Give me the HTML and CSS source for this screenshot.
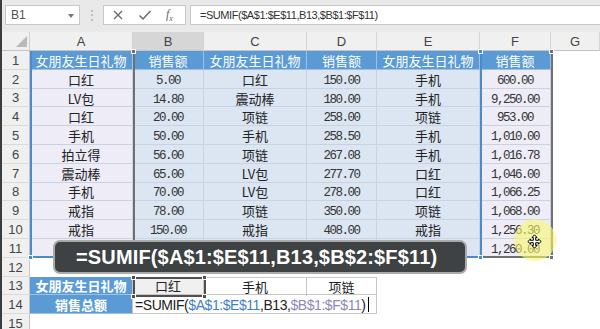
FILE: index.html
```
<!DOCTYPE html>
<html lang="zh-CN">
<head>
    <meta charset="UTF-8">
    <title>SUMIF 多列条件求和</title>
    <link rel="stylesheet" href="styles.css">
</head>
<body>
    <div class="formula-bar">
        <div class="name-box">B1<span class="drop"></span></div>
        <div class="dots">⋮</div>
        <div class="fx-box">
            <svg class="ico" width="12" height="12" viewBox="0 0 12 12"><path d="M2 2 L10 10 M10 2 L2 10" stroke="#6a6a6a" stroke-width="1.3" fill="none"/></svg>
            <svg class="ico" width="14" height="12" viewBox="0 0 14 12"><path d="M1.5 6.5 L5 10 L12.5 2" stroke="#6a6a6a" stroke-width="1.5" fill="none"/></svg>
            <span class="fx">f<sub>x</sub></span>
        </div>
        <div class="formula-input">=SUMIF($A$1:$E$11,B13,$B$1:$F$11)</div>
    </div>

    <div class="sheet">
        <div class="corner"><span class="tri"></span></div>
        <div class="ch">A</div><div class="ch sel">B</div><div class="ch">C</div><div class="ch">D</div><div class="ch">E</div><div class="ch">F</div><div class="ch">G</div>

        <div class="rh">1</div>
        <div class="c h">女朋友生日礼物</div><div class="c h">销售额</div><div class="c h">女朋友生日礼物</div><div class="c h">销售额</div><div class="c h">女朋友生日礼物</div><div class="c h">销售额</div><div class="e"></div>

        <div class="rh">2</div>
        <div class="c la">口红</div><div class="c lb n">5.00</div><div class="c lb">口红</div><div class="c lb n">150.00</div><div class="c lb">手机</div><div class="c la n">600.00</div><div class="e"></div>

        <div class="rh">3</div>
        <div class="c la">LV包</div><div class="c lb n">14.80</div><div class="c lb">震动棒</div><div class="c lb n">180.00</div><div class="c lb">手机</div><div class="c la n">9,250.00</div><div class="e"></div>

        <div class="rh">4</div>
        <div class="c la">口红</div><div class="c lb n">20.00</div><div class="c lb">项链</div><div class="c lb n">258.00</div><div class="c lb">项链</div><div class="c la n">953.00</div><div class="e"></div>

        <div class="rh">5</div>
        <div class="c la">手机</div><div class="c lb n">50.00</div><div class="c lb">手机</div><div class="c lb n">258.50</div><div class="c lb">手机</div><div class="c la n">1,010.00</div><div class="e"></div>

        <div class="rh">6</div>
        <div class="c la">拍立得</div><div class="c lb n">56.00</div><div class="c lb">项链</div><div class="c lb n">267.08</div><div class="c lb">手机</div><div class="c la n">1,016.78</div><div class="e"></div>

        <div class="rh">7</div>
        <div class="c la">震动棒</div><div class="c lb n">65.00</div><div class="c lb">LV包</div><div class="c lb n">277.70</div><div class="c lb">口红</div><div class="c la n">1,046.00</div><div class="e"></div>

        <div class="rh">8</div>
        <div class="c la">手机</div><div class="c lb n">70.00</div><div class="c lb">LV包</div><div class="c lb n">278.00</div><div class="c lb">口红</div><div class="c la n">1,066.25</div><div class="e"></div>

        <div class="rh">9</div>
        <div class="c la">戒指</div><div class="c lb n">78.00</div><div class="c lb">项链</div><div class="c lb n">350.00</div><div class="c lb">项链</div><div class="c la n">1,068.00</div><div class="e"></div>

        <div class="rh">10</div>
        <div class="c la">戒指</div><div class="c lb n">150.00</div><div class="c lb">戒指</div><div class="c lb n">408.00</div><div class="c lb">戒指</div><div class="c la n">1,256.30</div><div class="e"></div>

        <div class="rh">11</div>
        <div class="c la"></div><div class="c lb"></div><div class="c lb"></div><div class="c lb"></div><div class="c lb"></div><div class="c la n">1,260.00</div><div class="e"></div>

        <div class="rh">12</div>
        <div class="e"></div><div class="e"></div><div class="e"></div><div class="e"></div><div class="e"></div><div class="e"></div><div class="e"></div>

        <div class="rh">13</div>
        <div class="c h b">女朋友生日礼物</div><div class="c refcell">口红</div><div class="c w top">手机</div><div class="c w top">项链</div><div class="e"></div><div class="e"></div><div class="e"></div>

        <div class="rh">14</div>
        <div class="c h b">销售总额</div>
        <div class="c edit"><span class="edit-text">=SUMIF(<span class="r1">$A$1:$E$11</span>,B13,<span class="r2">$B$1:$F$11</span>)<span class="caret"></span></span></div>
        <div class="c w"></div><div class="c w"></div><div class="e"></div><div class="e"></div><div class="e"></div>

        <div class="rh">15</div>
        <div class="e"></div><div class="e"></div><div class="e"></div><div class="e"></div><div class="e"></div><div class="e"></div><div class="e"></div>

        <!-- 公式引用区域的高亮框 -->
        <div class="range range-b"></div>
        <div class="range range-a"></div>
        <div class="ref-box"></div>
        <span class="hd hd-gray" style="left:129px;top:17px"></span>
        <span class="hd hd-blue" style="left:476px;top:17px"></span>
        <span class="hd hd-gray" style="left:547px;top:17px"></span>
        <span class="hd hd-blue" style="left:476px;top:223px"></span>
        <span class="hd hd-gray" style="left:547px;top:223px"></span>
        <span class="hd hd-blue" style="left:26px;top:223px"></span>
        <span class="hd hd-dark" style="left:129px;top:243px"></span>
        <span class="hd hd-dark" style="left:200px;top:243px"></span>
        <span class="hd hd-dark" style="left:129px;top:262px"></span>
        <span class="hd hd-dark" style="left:200px;top:262px"></span>

        <div class="tip">=SUMIF($A$1:$E$11,B13,$B$2:$F$11)</div>

        <div class="spot"></div>
        <svg class="move" width="15" height="15" viewBox="0 0 15 15">
            <path d="M7.5 0.8 L10 3.5 L8.7 3.5 L8.7 6.3 L11.5 6.3 L11.5 5 L14.2 7.5 L11.5 10 L11.5 8.7 L8.7 8.7 L8.7 11.5 L10 11.5 L7.5 14.2 L5 11.5 L6.3 11.5 L6.3 8.7 L3.5 8.7 L3.5 10 L0.8 7.5 L3.5 5 L3.5 6.3 L6.3 6.3 L6.3 3.5 L5 3.5 Z" fill="#fff" stroke="#000" stroke-width="1"/>
        </svg>
    </div>
</body>
</html>
```

FILE: styles.css
```
body {
    margin: 0;
    width: 600px;
    height: 329px;
    overflow: hidden;
    box-sizing: border-box;
    border-left: 2px solid #3c3c3c;
    background: #fff;
    font-family: "Liberation Sans", Arial, sans-serif;
}

/* 编辑栏 */
.formula-bar {
    height: 32px;
    box-sizing: border-box;
    padding: 5px 0 0 3px;
    display: flex;
    align-items: flex-start;
    background: #e9e9e9;
}

.name-box {
    width: 75px;
    height: 20px;
    box-sizing: border-box;
    border: 1px solid #c8c8c8;
    background: #fff;
    position: relative;
    padding-left: 5px;
    font-size: 12px;
    line-height: 18px;
    color: #505050;
}

.drop {
    position: absolute;
    right: 5px;
    top: 8px;
    border-left: 3px solid transparent;
    border-right: 3px solid transparent;
    border-top: 4px solid #777;
}

.dots {
    width: 23px;
    text-align: center;
    font-size: 12px;
    line-height: 20px;
    color: #a8a8a8;
}

.fx-box {
    width: 83px;
    height: 20px;
    box-sizing: border-box;
    border: 1px solid #c8c8c8;
    background: #fff;
    display: flex;
    align-items: center;
    padding-left: 8px;
    gap: 14px;
}

.fx {
    font-family: "Liberation Serif", serif;
    font-style: italic;
    font-size: 12px;
    color: #666;
}

.fx sub {
    font-size: 8px;
}

.formula-input {
    flex: 1;
    height: 20px;
    margin-left: 4px;
    box-sizing: border-box;
    border: 1px solid #c8c8c8;
    border-right: 0;
    background: #fff;
    padding-left: 9px;
    font-size: 11px;
    letter-spacing: -0.45px;
    line-height: 18px;
    color: #333;
}

/* 工作表 */
.sheet {
    position: relative;
    display: grid;
    grid-template-columns: 28px 103px 71px 103px 70px 103px 71px 1fr;
    grid-template-rows: 19px repeat(15, 18.8px);
}

.corner {
    position: relative;
    background: #f0f0f0;
    border-right: 1px solid #d0d0d0;
    border-bottom: 1px solid #c4c4c4;
}

.tri {
    position: absolute;
    right: 2px;
    bottom: 3px;
    border-left: 11px solid transparent;
    border-bottom: 11px solid #b9b9b9;
}

.ch {
    background: #f0f0f0;
    border-right: 1px solid #d4d4d4;
    border-bottom: 1px solid #c4c4c4;
    display: flex;
    align-items: center;
    justify-content: center;
    font-size: 13px;
    color: #444;
}

.ch.sel {
    background: #d6d6d6;
}

.rh {
    background: #f0f0f0;
    border-right: 1px solid #c4c4c4;
    border-bottom: 1px solid #dadada;
    display: flex;
    align-items: center;
    justify-content: center;
    padding-top: 1px;
    font-size: 13px;
    color: #444;
}

.c {
    display: flex;
    align-items: center;
    justify-content: center;
    padding-top: 1px;
    box-sizing: border-box;
    border-right: 1px solid #c9d2e0;
    border-bottom: 1px solid #c9d2e0;
    font-family: "Noto Sans CJK SC", sans-serif;
    font-size: 13px;
    color: #222;
    white-space: nowrap;
}

.e {
    background: #fff;
}

.h {
    background: #5b9bd5;
    color: #fff;
    border-right-color: #9fbfe3;
    border-bottom-color: #9fbfe3;
}

.h.b {
    font-weight: bold;
    border-right-color: #c6c6c6;
}

.la {
    background: #eeecf7;
}

.lb {
    background: #dce6f2;
}

.n {
    padding-top: 4px;
    font-family: "Liberation Mono", monospace;
    font-size: 12.5px;
    letter-spacing: -1.5px;
    color: #333;
}

.w {
    background: #fff;
    border-color: #c6c6c6;
}

.top {
    border-top: 1px solid #c6c6c6;
}

.refcell {
    background: #f0f0f0;
    border-color: #c6c6c6;
}

.edit {
    justify-content: flex-start;
    padding-left: 2px;
    background: #fff;
    border-bottom-color: #c6c6c6;
    position: relative;
    z-index: 3;
}

.edit-text {
    display: inline-flex;
    align-items: center;
    background: #fff;
    width: 236px;
    height: 17px;
    font-family: "Liberation Sans", Arial, sans-serif;
    font-size: 14px;
    letter-spacing: -0.44px;
    color: #222;
}

.r1 {
    color: #3f7fc6;
}

.r2 {
    color: #8d87b8;
}

.caret {
    display: inline-block;
    width: 1px;
    height: 15px;
    margin-left: 2px;
    background: #000;
}

/* 引用区域框 */
.range {
    position: absolute;
    top: 19px;
    height: 207px;
    box-sizing: border-box;
    border: 2px solid;
    border-top: 0;
    pointer-events: none;
}

.range-a {
    left: 28px;
    width: 452px;
    border-color: #4a8bd0;
    z-index: 2;
}

.range-b {
    left: 131px;
    width: 420px;
    border-color: #707070;
    z-index: 1;
}

.ref-box {
    position: absolute;
    left: 131px;
    top: 245px;
    width: 73px;
    height: 20px;
    box-sizing: border-box;
    border: 2px solid #505050;
    z-index: 4;
}

.hd {
    position: absolute;
    width: 5px;
    height: 5px;
    box-sizing: border-box;
    border: 1px solid #fff;
    z-index: 5;
}

.hd-gray {
    background: #707070;
}

.hd-blue {
    background: #4a8bd0;
}

.hd-dark {
    background: #505050;
}

/* 放大的公式提示 */
.tip {
    position: absolute;
    left: 51px;
    top: 208px;
    width: 414px;
    height: 34px;
    box-sizing: border-box;
    padding-left: 21px;
    border: 2px solid #a9abab;
    border-radius: 7px;
    background: #3e4242;
    color: #fff;
    font-weight: bold;
    font-size: 20px;
    letter-spacing: 0.15px;
    line-height: 30px;
    z-index: 6;
}

.spot {
    position: absolute;
    left: 512px;
    top: 187px;
    width: 42px;
    height: 42px;
    border-radius: 50%;
    background: rgba(250, 248, 110, 0.6);
    z-index: 6;
}

.move {
    position: absolute;
    left: 525px;
    top: 202px;
    z-index: 7;
}
```
